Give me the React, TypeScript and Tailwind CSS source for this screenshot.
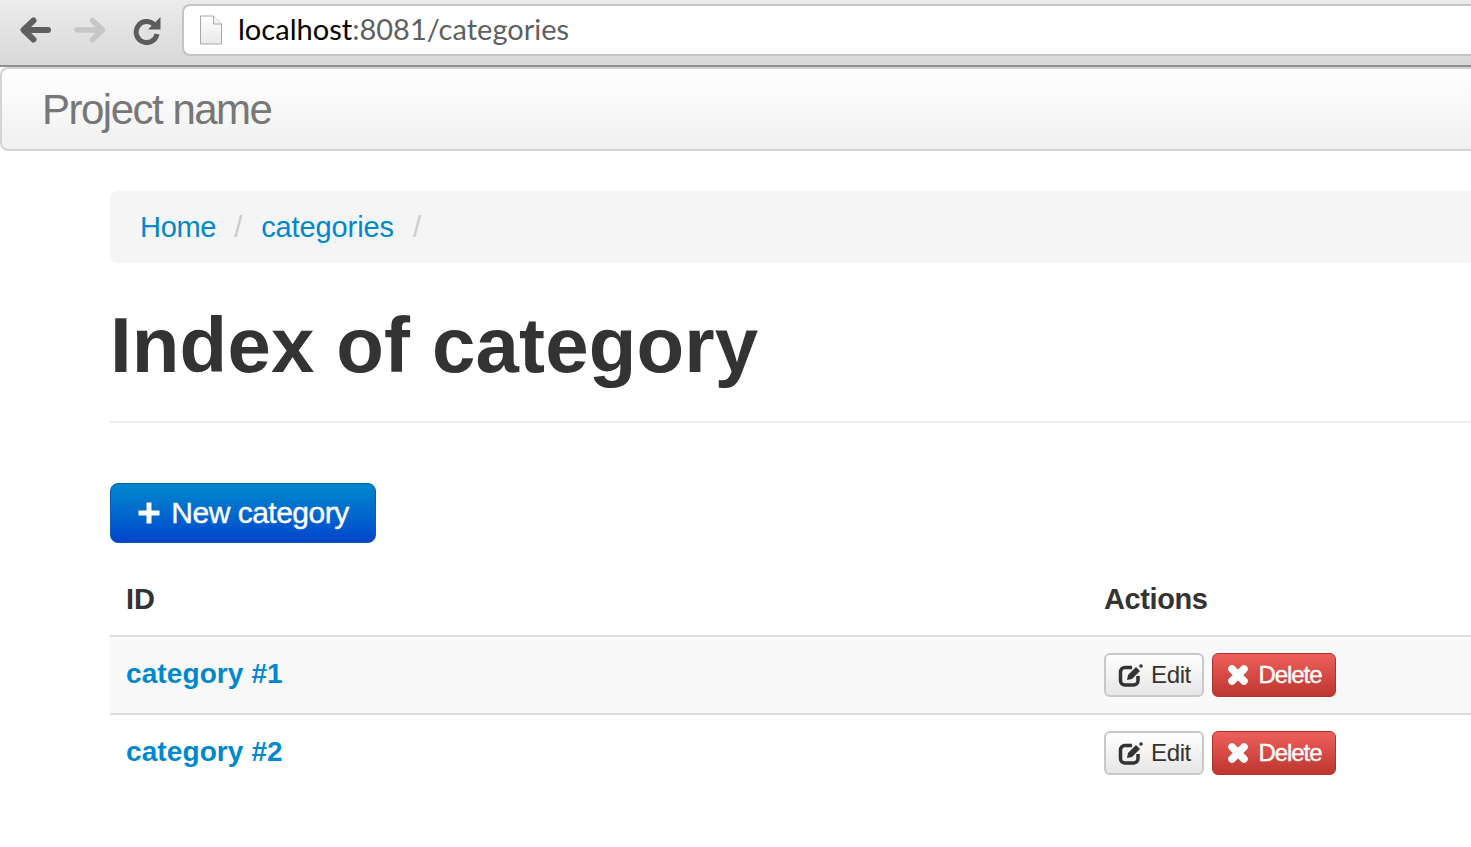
import React from "react";

const BackArrow = ({ color }: { color: string }) => (
  <svg width="34" height="30" viewBox="0 0 34 30">
    <path d="M30 15H6M15.500 5.500 5.500 15l10 9.500" fill="none" stroke={color} strokeWidth="6" strokeLinecap="round" strokeLinejoin="round" />
  </svg>
);

const ForwardArrow = ({ color }: { color: string }) => (
  <svg width="34" height="30" viewBox="0 0 34 30">
    <path d="M3 15h25M18.500 5.500l10 9.500-10 9.500" fill="none" stroke={color} strokeWidth="5.500" strokeLinecap="round" strokeLinejoin="round" />
  </svg>
);

const Reload = () => (
  <svg width="30" height="30" viewBox="0 0 30 30">
    <path d="M22 9.500A10.500 10.500 0 1 0 25 19" fill="none" stroke="#5c5c5c" strokeWidth="5" />
    <path d="M28.500 2v12.500H16z" fill="#5c5c5c" />
  </svg>
);

const PageIcon = () => (
  <svg width="24" height="30" viewBox="0 0 24 30">
    <defs>
      <linearGradient id="page" x1="0" y1="0" x2="0" y2="1">
        <stop offset="0" stopColor="#ffffff" />
        <stop offset="1" stopColor="#e8e8e8" />
      </linearGradient>
    </defs>
    <path d="M1.500 1h13l8 8v20h-21z" fill="url(#page)" stroke="#a8a8a8" />
    <path d="M14.500 1v8h8" fill="#f4f4f4" stroke="#a8a8a8" />
  </svg>
);

const PlusIcon = () => (
  <svg width="24" height="24" viewBox="0 0 24 24">
    <path d="M9.500 1.500h5v8h8v5h-8v8h-5v-8h-8v-5h8z" fill="#fff" />
  </svg>
);

const EditIcon = () => (
  <svg width="25" height="24" viewBox="0 0 25 24" className="shrink-0">
    <path d="M14 4.500H7A4.500 4.500 0 0 0 2.500 9v8.500A4.500 4.500 0 0 0 7 22h8.500a4.500 4.500 0 0 0 4.500-4.500V13" fill="none" stroke="#333" strokeWidth="3.500" />
    <path d="M9 17l1-5 8-8 4 4-8 8z" fill="#333" />
    <circle cx="23" cy="3" r="1.800" fill="#333" />
  </svg>
);

const CrossIcon = () => (
  <svg width="22" height="22" viewBox="0 0 22 22" className="shrink-0">
    <path d="M5 5l12 12M17 5 5 17" stroke="#fff" strokeWidth="7.500" strokeLinecap="round" />
  </svg>
);

const Row = ({ name, bg }: { name: string; bg: string }) => (
  <div className={`flex h-[78px] border-t-2 border-[#dddddd] ${bg}`}>
    <div className="w-[994px] pl-4 pt-[19px] text-[28px] leading-[36px] font-bold text-[#0088cc] tracking-[0.1px]">{name}</div>
    <div className="flex gap-2 pt-[16px]">
      <button className="flex h-[44px] w-[100px] items-center justify-center gap-[8px] rounded-md border-2 border-[#c8c8c8] bg-gradient-to-b from-white to-[#e6e6e6] pl-px text-[24px] text-[#333333] tracking-[-0.4px]">
        <EditIcon />
        Edit
      </button>
      <button className="flex h-[44px] w-[124px] items-center justify-center gap-[10px] rounded-md border border-[#b5302b] bg-gradient-to-b from-[#ee5f5b] to-[#bd362f] text-[24px] text-white tracking-[-1.1px] [-webkit-text-stroke:0.4px_white]">
        <CrossIcon />
        Delete
      </button>
    </div>
  </div>
);

export default function App() {
  return (
    <div className="h-[847px] w-[1471px] overflow-hidden bg-white font-['Liberation_Sans',sans-serif]">
      {/* browser chrome */}
      <div className="flex h-[67px] items-start border-b-2 border-[#8f8f8f] bg-gradient-to-b from-[#ececec] to-[#d8d8d8]">
        <div className="flex w-[182px] items-center pl-[18px] pt-[15px]">
          <BackArrow color="#5f5f5f" />
          <div className="ml-[22px]">
            <ForwardArrow color="#c6c6c6" />
          </div>
          <div className="ml-[24px]">
            <Reload />
          </div>
        </div>
        <div className="mt-[4px] flex h-[52px] flex-1 items-center rounded-l-lg border-2 border-r-0 border-[#c4c4c4] bg-white pl-[15px]">
          <PageIcon />
          <span className="ml-[15px] font-['Lato',sans-serif] text-[29px] text-black tracking-[0.02px] -translate-y-px">
            localhost<span className="text-[#5f5f5f]">:8081/categories</span>
          </span>
        </div>
      </div>

      {/* navbar */}
      <div className="flex h-[84px] items-center rounded-l-lg border-2 border-r-0 border-[#d4d4d4] bg-gradient-to-b from-white to-[#f0f0f0] pl-[40px]">
        <span className="text-[42px] font-normal text-[#777777] tracking-[-1.5px]">Project name</span>
      </div>

      <main className="ml-[110px] mt-[40px]">
        {/* breadcrumb */}
        <div className="flex h-[72px] items-center rounded-l-lg bg-[#f5f5f5] pl-[30px] pt-[2px] text-[29px] tracking-[-0.1px]">
          <a className="text-[#0088cc] tracking-[-0.3px]">Home</a>
          <span className="ml-[18px] text-[#cccccc]">/</span>
          <a className="ml-[19px] text-[#0088cc]">categories</a>
          <span className="ml-[19px] text-[#cccccc]">/</span>
        </div>

        <h1 className="mt-[34px] h-[126px] border-b-2 border-[#eeeeee] text-[78px] leading-[96px] font-bold text-[#333333] tracking-[0.15px]">
          Index of category
        </h1>

        <button className="mt-[60px] flex h-[60px] w-[266px] items-center justify-center gap-[10px] rounded-lg border border-[#0a5cb0] bg-gradient-to-b from-[#0088cc] to-[#0044cc] pb-[1px] text-[30px] text-white tracking-[-0.5px] [-webkit-text-stroke:0.4px_white]">
          <PlusIcon />
          New category
        </button>

        <div className="mt-[26px] flex h-[66px] text-[29px] font-bold text-[#333333]">
          <div className="w-[994px] pl-4 pt-[9px]">ID</div>
          <div className="pt-[9px] tracking-[-0.4px]">Actions</div>
        </div>
        <Row name="category #1" bg="bg-[#f9f9f9]" />
        <Row name="category #2" bg="bg-white" />
      </main>
    </div>
  );
}
